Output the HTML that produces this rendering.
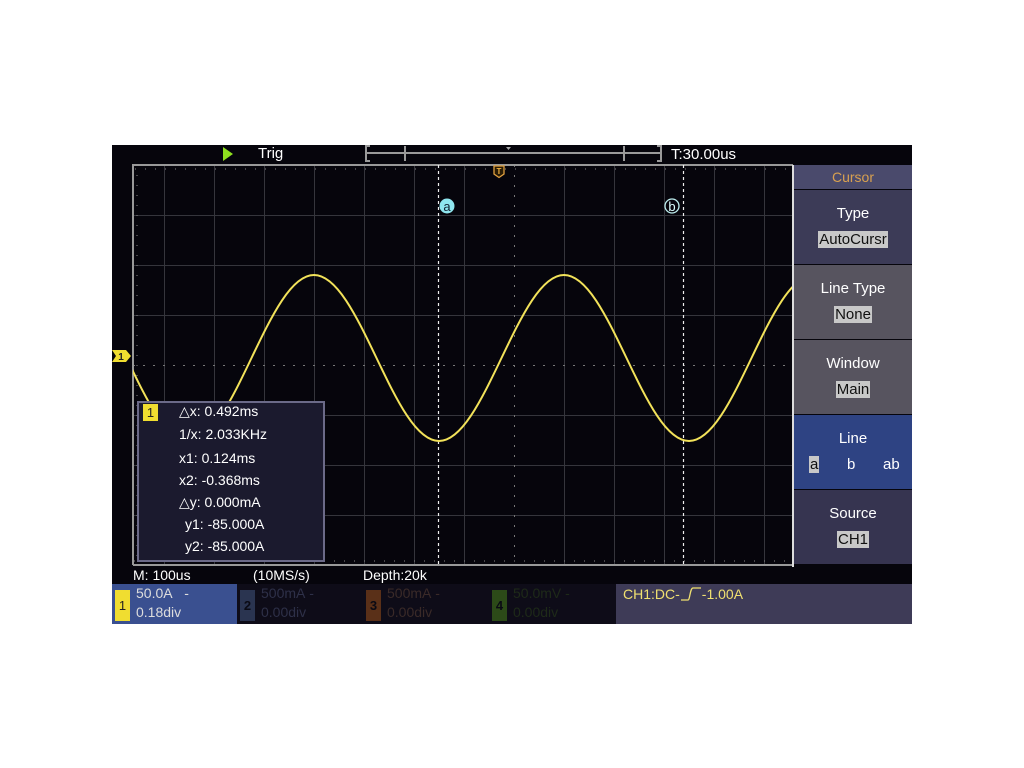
<!DOCTYPE html>
<html><head><meta charset="utf-8"><style>
body{margin:0;width:1024px;height:768px;background:#fff;position:relative;overflow:hidden;font-family:"Liberation Sans",sans-serif}
.a{position:absolute}
.t{position:absolute;color:#fff;font-size:14px;white-space:nowrap}
.menu{position:absolute;left:794px;width:118px;text-align:center;color:#fff;font-size:15px}
.hl{background:#c8c8c8;color:#111;padding:0 1px}
</style></head><body>
<div class="a" style="left:112px;top:145px;width:800px;height:479px;background:#06050c"></div>
<svg class="a" style="left:0;top:0" width="1024" height="768">
<defs><clipPath id="c"><rect x="133" y="165" width="660" height="400"/></clipPath></defs>
<g stroke="#9a9a9a" stroke-width="2" fill="none">
<path d="M370 146 H366 V161 H370"/><path d="M657 146 H661 V161 H657"/>
<line x1="366" y1="153" x2="661" y2="153"/>
<line x1="405" y1="146" x2="405" y2="161"/><line x1="624" y1="146" x2="624" y2="161"/>
</g>
<path d="M506 147 h5 l-2.5 3z" fill="#aaa"/>
<polygon points="223,147 233,154 223,161" fill="#8fe01f"/>
<g stroke="#35353c" stroke-width="1">
<line x1="164.5" y1="165" x2="164.5" y2="565"/><line x1="214.5" y1="165" x2="214.5" y2="565"/><line x1="264.5" y1="165" x2="264.5" y2="565"/><line x1="314.5" y1="165" x2="314.5" y2="565"/><line x1="364.5" y1="165" x2="364.5" y2="565"/><line x1="414.5" y1="165" x2="414.5" y2="565"/><line x1="464.5" y1="165" x2="464.5" y2="565"/><line x1="564.5" y1="165" x2="564.5" y2="565"/><line x1="614.5" y1="165" x2="614.5" y2="565"/><line x1="664.5" y1="165" x2="664.5" y2="565"/><line x1="714.5" y1="165" x2="714.5" y2="565"/><line x1="764.5" y1="165" x2="764.5" y2="565"/>
<line x1="133" y1="215.5" x2="793" y2="215.5"/><line x1="133" y1="265.5" x2="793" y2="265.5"/><line x1="133" y1="315.5" x2="793" y2="315.5"/><line x1="133" y1="415.5" x2="793" y2="415.5"/><line x1="133" y1="465.5" x2="793" y2="465.5"/><line x1="133" y1="515.5" x2="793" y2="515.5"/>
</g>
<g stroke="#777" stroke-width="1" stroke-dasharray="2 8">
<line x1="133" y1="365.5" x2="793" y2="365.5"/><line x1="514.5" y1="165" x2="514.5" y2="565"/>
</g>
<g stroke="#999" stroke-width="2" fill="none">
<path d="M133 565 V165 H793"/><line x1="133" y1="565" x2="793" y2="565"/>
</g>
<g stroke="#888" stroke-width="1" stroke-dasharray="1 9">
<line x1="134" y1="169" x2="793" y2="169" stroke-dashoffset="-1"/>
<line x1="134" y1="561" x2="793" y2="561"/>
<line x1="137" y1="175" x2="137" y2="565"/>
</g>
<g stroke="#eee" stroke-width="1.2" stroke-dasharray="3 3">
<line x1="438.5" y1="165" x2="438.5" y2="565"/><line x1="683.5" y1="165" x2="683.5" y2="565"/>
</g>
<path clip-path="url(#c)" fill="none" stroke="#f2e25a" stroke-width="2" d="M126.5 358
c20.4,42.6 39.9,83 62.5,83 c22.6,0 42.1,-40.4 62.5,-83 c20.4,-42.6 39.9,-83 62.5,-83 c22.6,0 42.1,40.4 62.5,83
c20.4,42.6 39.9,83 62.5,83 c22.6,0 42.1,-40.4 62.5,-83 c20.4,-42.6 39.9,-83 62.5,-83 c22.6,0 42.1,40.4 62.5,83
c20.4,42.6 39.9,83 62.5,83 c22.6,0 42.1,-40.4 62.5,-83 c20.4,-42.6 39.9,-83 62.5,-83 c22.6,0 42.1,40.4 62.5,83"/>
<circle cx="447" cy="206" r="7.5" fill="#8fe6ef"/>
<text x="447" y="211" font-size="13" text-anchor="middle" fill="#123" font-family="Liberation Sans">a</text>
<circle cx="672" cy="206" r="7" fill="none" stroke="#bfeff0" stroke-width="1.3"/>
<text x="672" y="211" font-size="13" text-anchor="middle" fill="#dff" font-family="Liberation Sans">b</text>
<path d="M494 166 h10 v8 l-5 3.5 l-5 -3.5z" fill="#2a1c05" stroke="#e0a040" stroke-width="1.3"/>
<text x="499" y="174" font-size="8" font-weight="bold" text-anchor="middle" fill="#f0b040" font-family="Liberation Sans">T</text>
<path d="M112 350 h14 l5 6 l-5 6 h-14 l4 -6z" fill="#f0dd30"/>
<text x="121" y="360" font-size="10" font-weight="bold" text-anchor="middle" fill="#222" font-family="Liberation Sans">1</text>
</svg>
<div class="t" style="left:258px;top:145px;font-size:15px">Trig</div>
<div class="t" style="left:671px;top:146px;font-size:15px">T:30.00us</div>

<div class="a" style="left:137px;top:401px;width:184px;height:157px;background:#1b1a2e;border:2px solid #6b6a88"></div>
<div class="a" style="left:143px;top:404px;width:15px;height:17px;background:#f0dd30;color:#222;font-size:13px;text-align:center;line-height:17px">1</div>
<div class="t" style="left:179px;top:403px">△x: 0.492ms</div>
<div class="t" style="left:179px;top:426px">1/x: 2.033KHz</div>
<div class="t" style="left:179px;top:450px">x1: 0.124ms</div>
<div class="t" style="left:179px;top:472px">x2: -0.368ms</div>
<div class="t" style="left:179px;top:494px">△y: 0.000mA</div>
<div class="t" style="left:185px;top:516px">y1: -85.000A</div>
<div class="t" style="left:185px;top:538px">y2: -85.000A</div>

<div class="a" style="left:792px;top:165px;width:2px;height:402px;background:#ddd"></div>
<div class="menu" style="top:165px;height:24px;background:#4a4a6c;color:#d8a050;line-height:24px;font-size:14px">Cursor</div>
<div class="menu" style="top:190px;height:74px;background:#3c3b57"><div style="margin-top:15px">Type</div><div style="margin-top:9px"><span class="hl">AutoCursr</span></div></div>
<div class="menu" style="top:265px;height:74px;background:#57545f"><div style="margin-top:15px">Line Type</div><div style="margin-top:9px"><span class="hl">None</span></div></div>
<div class="menu" style="top:340px;height:74px;background:#57545f"><div style="margin-top:15px">Window</div><div style="margin-top:9px"><span class="hl">Main</span></div></div>
<div class="menu" style="top:415px;height:74px;background:#2e4383"><div style="margin-top:15px">Line</div><div style="margin-top:9px;position:relative;height:20px"><span class="hl" style="position:absolute;left:15px">a</span><span style="position:absolute;left:53px">b</span><span style="position:absolute;left:89px">ab</span></div></div>
<div class="menu" style="top:490px;height:74px;background:#363450"><div style="margin-top:15px">Source</div><div style="margin-top:9px"><span class="hl">CH1</span></div></div>

<div class="t" style="left:133px;top:567px">M: 100us</div>
<div class="t" style="left:253px;top:567px">(10MS/s)</div>
<div class="t" style="left:363px;top:567px">Depth:20k</div>
<div class="a" style="left:112px;top:584px;width:125px;height:40px;background:#3a5090"></div>
<div class="a" style="left:237px;top:584px;width:379px;height:40px;background:#0e0c18"></div>
<div class="a" style="left:616px;top:584px;width:296px;height:40px;background:#3e3b57"></div>
<div class="a" style="left:115px;top:590px;width:15px;height:31px;background:#f0dd30;color:#222;font-size:13px;text-align:center;line-height:31px">1</div>
<div class="t" style="left:136px;top:585px;color:#ddd">50.0A&nbsp;&nbsp;&nbsp;-</div>
<div class="t" style="left:136px;top:604px;color:#ddd">0.18div</div>
<div class="a" style="left:240px;top:590px;width:15px;height:31px;background:#2a3450;color:#0a0a14;font-size:13px;font-weight:bold;text-align:center;line-height:31px">2</div>
<div class="t" style="left:261px;top:585px;color:#2e3048">500mA&nbsp;-</div>
<div class="t" style="left:261px;top:604px;color:#2e3048">0.00div</div>
<div class="a" style="left:366px;top:590px;width:15px;height:31px;background:#5a3018;color:#0a0a14;font-size:13px;font-weight:bold;text-align:center;line-height:31px">3</div>
<div class="t" style="left:387px;top:585px;color:#3a2a28">500mA&nbsp;-</div>
<div class="t" style="left:387px;top:604px;color:#3a2a28">0.00div</div>
<div class="a" style="left:492px;top:590px;width:15px;height:31px;background:#2c4a18;color:#0a0a14;font-size:13px;font-weight:bold;text-align:center;line-height:31px">4</div>
<div class="t" style="left:513px;top:585px;color:#1e2a18">50.0mV -</div>
<div class="t" style="left:513px;top:604px;color:#1e2a18">0.00div</div>
<div class="t" style="left:623px;top:586px;color:#f0e070">CH1:DC-<span style="display:inline-block;width:22px"><svg width="22" height="14" style="vertical-align:-2px"><path d="M1 13 H8 C10 13 10 1 13 1 H21" stroke="#f0e070" stroke-width="1.3" fill="none"/></svg></span>-1.00A</div>
</body></html>
